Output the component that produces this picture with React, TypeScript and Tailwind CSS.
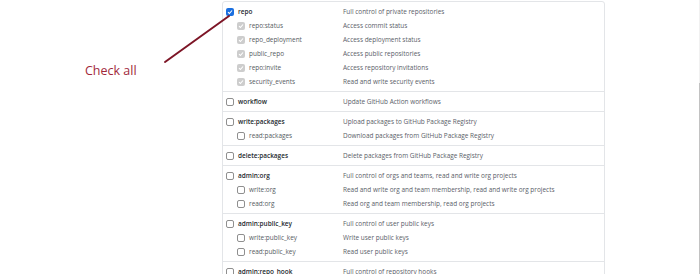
import React from "react";

interface Scope {
  name: string;
  desc: string;
  checked?: boolean;
  children?: [string, string][];
}

const scopes: Scope[] = [
  {
    name: "repo",
    desc: "Full control of private repositories",
    checked: true,
    children: [
      ["repo:status", "Access commit status"],
      ["repo_deployment", "Access deployment status"],
      ["public_repo", "Access public repositories"],
      ["repo:invite", "Access repository invitations"],
      ["security_events", "Read and write security events"],
    ],
  },
  { name: "workflow", desc: "Update GitHub Action workflows" },
  {
    name: "write:packages",
    desc: "Upload packages to GitHub Package Registry",
    children: [["read:packages", "Download packages from GitHub Package Registry"]],
  },
  { name: "delete:packages", desc: "Delete packages from GitHub Package Registry" },
  {
    name: "admin:org",
    desc: "Full control of orgs and teams, read and write org projects",
    children: [
      ["write:org", "Read and write org and team membership, read and write org projects"],
      ["read:org", "Read org and team membership, read org projects"],
    ],
  },
  {
    name: "admin:public_key",
    desc: "Full control of user public keys",
    children: [
      ["write:public_key", "Write user public keys"],
      ["read:public_key", "Read user public keys"],
    ],
  },
  { name: "admin:repo_hook", desc: "Full control of repository hooks" },
];

// checkbox: "on" = blue checked, "locked" = greyed out checked, "off" = empty
function Box({ state }: { state: "on" | "locked" | "off" }) {
  if (state === "off") {
    return <span className="w-[8px] h-[8px] rounded-[2px] border border-[#8f8f8f] bg-white shrink-0" />;
  }
  return (
    <span
      className={
        "w-[8px] h-[8px] rounded-[2px] shrink-0 flex items-center justify-center " +
        (state === "on" ? "bg-[#1a6fe0]" : "bg-[#cdcdcd]")
      }
    >
      <svg width="6" height="6" viewBox="0 0 6 6">
        <path d="M1 3.2 L2.4 4.5 L5 1.5" fill="none" stroke="white" strokeWidth="1.1" />
      </svg>
    </span>
  );
}

function Row({ name, desc, sub, state }: { name: string; desc: string; sub?: boolean; state: "on" | "locked" | "off" }) {
  return (
    <div className="flex items-center h-[14px] whitespace-nowrap">
      <div className={"w-[120px] flex items-center gap-[4px] " + (sub ? "pl-[14px]" : "pl-[3px]")}>
        <Box state={state} />
        <span className={sub ? "text-[#555b62]" : "text-[#24292e] font-semibold"}>{name}</span>
      </div>
      <span className="text-[#5a6068]">{desc}</span>
    </div>
  );
}

export default function App() {
  return (
    <div className="relative flex w-[700px] h-[274px] overflow-hidden bg-white font-['Open_Sans',sans-serif]">
      <div className="w-[222px] shrink-0 pt-[57px] pl-[85px]">
        <span className="text-[12.5px] text-[#a1283b]">Check all</span>
      </div>

      <div className="w-[383px] shrink-0 self-start mt-[1px] border border-[#e3e5e8] rounded-[3px] text-[6.45px]">
        {scopes.map((s, i) => (
          <div key={s.name} className={"pt-[3px] pb-[2px] " + (i > 0 ? "border-t border-[#e3e5e8]" : "")}>
            <Row name={s.name} desc={s.desc} state={s.checked ? "on" : "off"} />
            {s.children?.map(([n, d]) => (
              <Row key={n} name={n} desc={d} sub state={s.checked ? "locked" : "off"} />
            ))}
          </div>
        ))}
      </div>

      <div className="flex-1" />
      {/* scrollbar edge */}
      <div className="w-[1px] flex flex-col">
        <div className="h-[83px] bg-[#f1f1f1]" />
        <div className="flex-1 bg-[#c2c2c2]" />
      </div>

      <svg className="absolute left-0 top-0 pointer-events-none" width="700" height="274">
        <line x1="165" y1="62" x2="229" y2="16" stroke="#7d1526" strokeWidth="2" strokeLinecap="round" />
      </svg>
    </div>
  );
}
